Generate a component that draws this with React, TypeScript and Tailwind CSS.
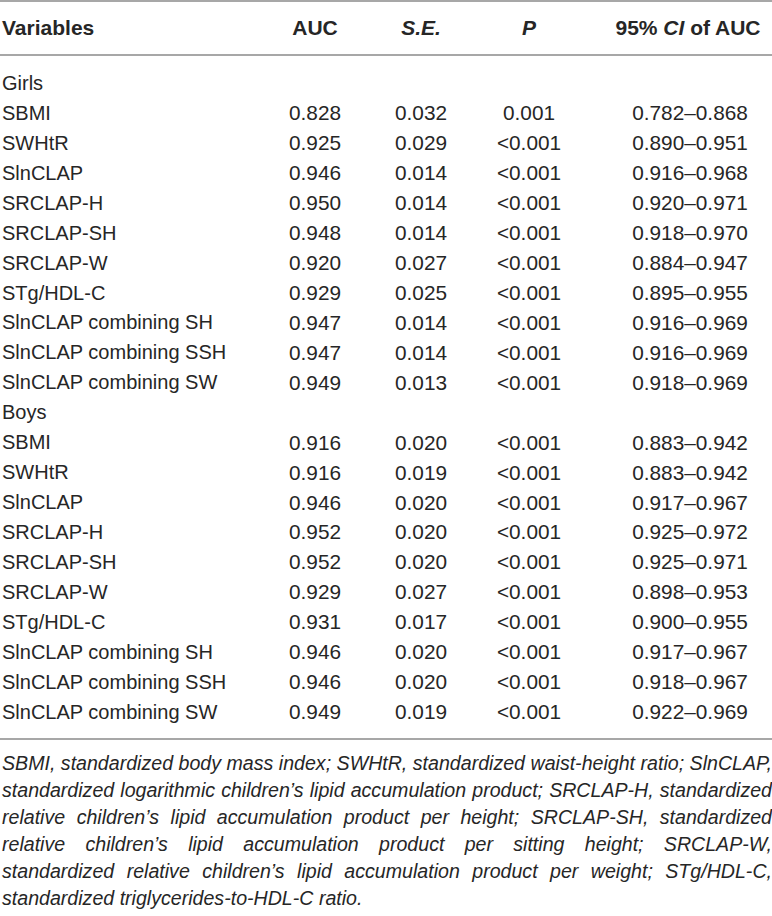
import React from 'react';

type Row = [string, string, string, string, string];

const girls: Row[] = [
  ['SBMI', '0.828', '0.032', '0.001', '0.782–0.868'],
  ['SWHtR', '0.925', '0.029', '<0.001', '0.890–0.951'],
  ['SlnCLAP', '0.946', '0.014', '<0.001', '0.916–0.968'],
  ['SRCLAP-H', '0.950', '0.014', '<0.001', '0.920–0.971'],
  ['SRCLAP-SH', '0.948', '0.014', '<0.001', '0.918–0.970'],
  ['SRCLAP-W', '0.920', '0.027', '<0.001', '0.884–0.947'],
  ['STg/HDL-C', '0.929', '0.025', '<0.001', '0.895–0.955'],
  ['SlnCLAP combining SH', '0.947', '0.014', '<0.001', '0.916–0.969'],
  ['SlnCLAP combining SSH', '0.947', '0.014', '<0.001', '0.916–0.969'],
  ['SlnCLAP combining SW', '0.949', '0.013', '<0.001', '0.918–0.969'],
];

const boys: Row[] = [
  ['SBMI', '0.916', '0.020', '<0.001', '0.883–0.942'],
  ['SWHtR', '0.916', '0.019', '<0.001', '0.883–0.942'],
  ['SlnCLAP', '0.946', '0.020', '<0.001', '0.917–0.967'],
  ['SRCLAP-H', '0.952', '0.020', '<0.001', '0.925–0.972'],
  ['SRCLAP-SH', '0.952', '0.020', '<0.001', '0.925–0.971'],
  ['SRCLAP-W', '0.929', '0.027', '<0.001', '0.898–0.953'],
  ['STg/HDL-C', '0.931', '0.017', '<0.001', '0.900–0.955'],
  ['SlnCLAP combining SH', '0.946', '0.020', '<0.001', '0.917–0.967'],
  ['SlnCLAP combining SSH', '0.946', '0.020', '<0.001', '0.918–0.967'],
  ['SlnCLAP combining SW', '0.949', '0.019', '<0.001', '0.922–0.969'],
];

const notes = [
  'SBMI, standardized body mass index; SWHtR, standardized waist-height ratio; SlnCLAP,',
  'standardized logarithmic children’s lipid accumulation product; SRCLAP-H, standardized',
  'relative children’s lipid accumulation product per height; SRCLAP-SH, standardized',
  'relative children’s lipid accumulation product per sitting height; SRCLAP-W,',
  'standardized relative children’s lipid accumulation product per weight; STg/HDL-C,',
];

function DataRow({ row }: { row: Row }) {
  return (
    <div className="flex h-[29.95px] items-center">
      <div className="w-[262px] pl-[2px]">{row[0]}</div>
      <div className="w-[106px] text-center text-[20.8px]">{row[1]}</div>
      <div className="w-[106px] text-center text-[20.8px]">{row[2]}</div>
      <div className="w-[110px] text-center text-[20.8px]">{row[3]}</div>
      <div className="flex-1 pl-[24px] text-center text-[20.8px]">{row[4]}</div>
    </div>
  );
}

function Group({ label, rows }: { label: string; rows: Row[] }) {
  return (
    <>
      <div className="flex h-[29.95px] items-center pl-[2px]">{label}</div>
      {rows.map((r, i) => (
        <DataRow key={label + i} row={r} />
      ))}
    </>
  );
}

export default function App() {
  return (
    <div className="w-[772px] bg-white text-[#262626] font-['Liberation_Sans',Arial,sans-serif] text-[20px]">
      <div className="border-t-2 border-[#a7a7a7]">
        <div className="flex h-[52px] items-center font-bold text-[21px]">
          <div className="w-[262px] pl-[2px]">Variables</div>
          <div className="w-[106px] text-center">AUC</div>
          <div className="w-[106px] text-center italic">S.E.</div>
          <div className="w-[110px] text-center italic">P</div>
          <div className="flex-1 pl-[20px] text-center">
            95% <span className="italic">CI</span> of AUC
          </div>
        </div>
      </div>
      <div className="border-t-2 border-b-2 border-[#a7a7a7] pt-[12px] pb-[11px]">
        <Group label="Girls" rows={girls} />
        <Group label="Boys" rows={boys} />
      </div>
      <div className="pt-[10px] italic text-[19.6px] leading-[27px] pl-[2px]">
        {notes.map((n, i) => (
          <div key={i} className="text-justify [text-align-last:justify]">
            {n}
          </div>
        ))}
        <div>standardized triglycerides-to-HDL-C ratio.</div>
      </div>
    </div>
  );
}
